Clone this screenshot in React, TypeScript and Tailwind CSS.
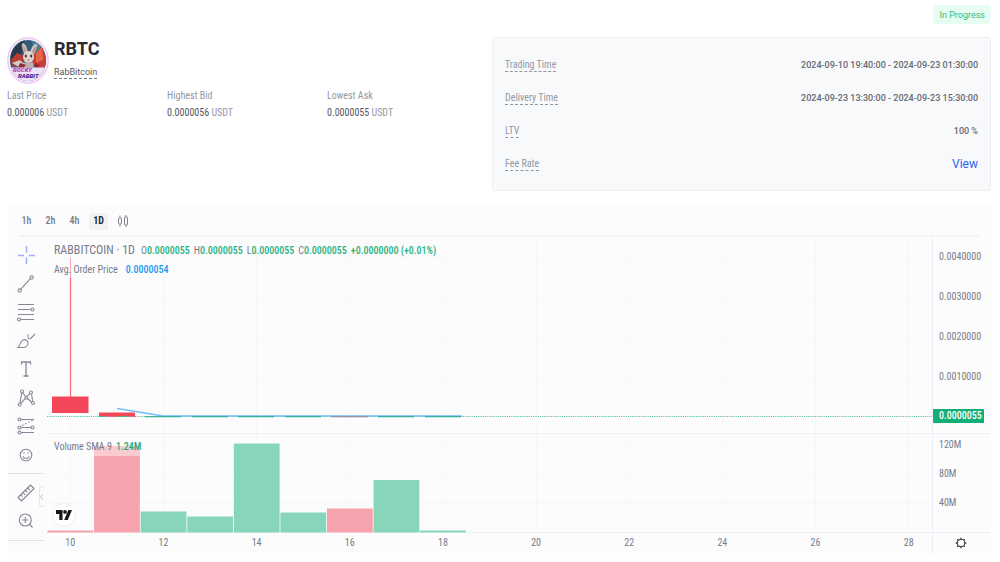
import React from 'react';

const intervals = ['1h', '2h', '4h', '1D'];
const prices = ['0.0040000', '0.0030000', '0.0020000', '0.0010000'];
const days = [10, 11, 12, 13, 14, 15, 16, 17, 18, 19, 20, 21, 22, 23, 24, 25, 26, 27, 28];
const quotes = [
  { label: 'Last Price', value: '0.000006' },
  { label: 'Highest Bid', value: '0.0000056' },
  { label: 'Lowest Ask', value: '0.0000055' },
];
const details = [
  { label: 'Trading Time', value: '2024-09-10 19:40:00 - 2024-09-23 01:30:00' },
  { label: 'Delivery Time', value: '2024-09-23 13:30:00 - 2024-09-23 15:30:00' },
  { label: 'LTV', value: '100 %' },
];
const ohlc = [
  { key: 'O', value: '0.0000055' },
  { key: 'H', value: '0.0000055' },
  { key: 'L', value: '0.0000055' },
  { key: 'C', value: '0.0000055' },
];
const volumes = [
  { day: 0, top: 293.5, up: false },
  { day: 1, top: 219, up: false },
  { day: 2, top: 274.5, up: true },
  { day: 3, top: 279.5, up: true },
  { day: 4, top: 206.5, up: true },
  { day: 5, top: 275.5, up: true },
  { day: 6, top: 271.5, up: false },
  { day: 7, top: 243, up: true },
  { day: 8, top: 293.5, up: true },
];

function Avatar() {
  return (
    <svg viewBox="0 0 42 47" className="h-[47px] w-[42px] shrink-0" role="img" aria-label="RabBitcoin logo">
      <defs>
        <clipPath id="coin">
          <ellipse cx="21" cy="23.5" rx="18" ry="20.5" />
        </clipPath>
      </defs>
      <ellipse cx="21" cy="23.5" rx="20.3" ry="22.8" fill="#f3e8fa" stroke="#edb8ee" strokeWidth="1" />
      <g clipPath="url(#coin)">
        <rect width="42" height="47" fill="#315d79" />
        <path d="M2 3h16l-3 13L4 27Z" fill="#263b50" />
        <path d="M25 4l14 5v19H29Z" fill="#40829b" />
        <path d="M3 24l7-8 8 3-2 9-9 2Z" fill="#b83c34" />
        <path d="M23 17l7-2 5-7 5 17-3 7-12-3Z" fill="#c83d35" />
        <path d="M29 16l6-6 1 13-7 3Z" fill="#e5644a" />
        <path d="M5 26l8-3 4 4-5 3Z" fill="#d6ccc7" />
        <path d="M18 18C15 12 14 7 16 6c3 1 4 6 5 10M23 16c1-5 4-10 7-9 1 3-2 8-4 12" fill="#d9d0cb" stroke="#8c8587" strokeWidth=".7" />
        <path d="M17.500 15c-1.500-4-1.500-6-1-7 1.500 2 2 4 2.500 7M25 16c.5-3 2-6 4-7 0 2-1 5-3 8" fill="#b98c86" />
        <ellipse cx="21.500" cy="20" rx="5.500" ry="6" fill="#ddd5cf" />
        <ellipse cx="18.800" cy="19" rx="1.100" ry="1.600" fill="#443036" />
        <ellipse cx="24.200" cy="19" rx="1.100" ry="1.600" fill="#443036" />
        <path d="M20 22.500h3l-1.500 1.800Z" fill="#ba6c6d" />
        <path d="M16 25.500h10l2 5H14Z" fill="#bdb1b2" />
        <path d="M13 26l6 2-3 3h-5ZM28 26l5 2-3 3-4-2Z" fill="#8f2b35" />
        <path d="M1 30.500h38v17H1Z" fill="#eee2f7" />
      </g>
      <g fontFamily="Roboto" fontWeight="900" fontStyle="italic">
        <text x="6" y="35" fontSize="6" fill="#b6349c">ROCKY</text>
        <text x="11" y="41" fontSize="6" fill="#4b258f">RABBIT</text>
      </g>
    </svg>
  );
}

function ToolIcon({ children }: { children: React.ReactNode }) {
  return (
    <svg viewBox="0 0 20 20" className="size-5" fill="none" stroke="#858897" strokeWidth="1.1" aria-hidden="true">
      {children}
    </svg>
  );
}

const drawingTools = [
  { name: 'Crosshair', icon: <path d="M10.500 1v6.500M10.500 12.500V19M2 10.500h6M13 10.500h6" stroke="#9caef5" strokeWidth="1.500" /> },
  { name: 'Trend line', icon: <><path d="M4.700 15.300l9.600-10.600" /><circle cx="3.600" cy="16.500" r="1.600" /><circle cx="15.700" cy="3.500" r="1.600" /></> },
  { name: 'Fib retracement', icon: <><path d="M2 2.500h16M2 7.500h12.500M2 12.500h16M5 17.500h13" /><circle cx="16.500" cy="7.500" r="1.500" /><circle cx="3" cy="17.500" r="1.500" /></> },
  { name: 'Brush', icon: <path d="M2 16.500C4.500 14 4 10.500 7 9c2.500-1 5 .5 5 3 0 3-2.500 4.500-5 4.500ZM12 3.500c-.8 2.800.5 5 2.700 4L19 3" /> },
  { name: 'Text', icon: <path d="M5.500 5.500V3h9v2.500M10 3v14M7.500 17h5" strokeWidth="1.300" /> },
  { name: 'Pattern', icon: <><path d="M4 15L5.700 5M7 5l2.500 3.500M11.500 8L14 5.700M15.500 6.500l1.300 7M5 15.300l4-4.600M11.500 10.500l4.500 4" /><circle cx="6" cy="3.500" r="1.500" /><circle cx="15" cy="4.500" r="1.500" /><circle cx="3.700" cy="16.500" r="1.500" /><circle cx="17" cy="15" r="1.500" /><circle cx="10.300" cy="9.700" r="1.300" /></> },
  { name: 'Position', icon: <><path d="M5 3.500h13M5 11.500h10M5 16.500h13" /><path d="M6 9.500l12-6" strokeDasharray="1.500 2" /><circle cx="3.500" cy="3.500" r="1.500" /><circle cx="3.500" cy="11.500" r="1.500" /><circle cx="16.500" cy="11.500" r="1.500" /><circle cx="3.500" cy="16.500" r="1.500" /></> },
  { name: 'Emoji', icon: <><circle cx="10" cy="10" r="5.800" /><path d="M8 7.300v1.500M12 7.300v1.500M6.800 11.500c1.200 2.600 5.200 2.600 6.400 0" /></> },
];

const viewTools = [
  { name: 'Measure', icon: <path d="M2 14.500L14.500 2 18 5.500 5.500 18ZM4.700 12l1.700 1.700M7 9.700l2.200 2.200M9.300 7.300L11 9M11.700 5l2.200 2.200" strokeLinejoin="round" /> },
  { name: 'Zoom in', icon: <><circle cx="9.300" cy="9" r="6" /><path d="M9.300 6v6M6.300 9h6M13.700 13.500L16.500 16.500" /></> },
];

function ToolButton({ name, children }: { name: string; children: React.ReactNode }) {
  return (
    <button type="button" aria-label={name} className="flex h-7 w-full items-center justify-center">
      <ToolIcon>{children}</ToolIcon>
    </button>
  );
}

function Plot() {
  const width = 885;
  const step = width / days.length;
  return (
    <svg viewBox="0 0 885 296" preserveAspectRatio="none" className="block h-[296px] w-full" role="img" aria-label="Price and volume chart">
      <g stroke="#f6f7f9" strokeWidth="1">
        {days.filter((d) => d % 2 === 0).map((d) => {
          const x = Math.floor((d - 9.5) * step) + 0.5;
          return <path key={d} d={`M${x} 0V296`} />;
        })}
        <path d="M0 20.500H885M0 60.500H885M0 100.500H885M0 140.500H885M0 208.500H885M0 237.500H885M0 266.500H885" />
      </g>
      <path d="M0 196.500H885M0 295.500H885" stroke="#edf0fa" />
      <path d="M23.500 21V41" stroke="#f9a5ae" strokeWidth="1" />
      <path d="M23.500 41V160" stroke="#f66b7a" strokeWidth="1.200" />
      <rect x="5" y="159.500" width="36.500" height="16.500" fill="#f4475a" />
      <rect x="52" y="175.500" width="36" height="4.500" fill="#f4475a" />
      <path d="M0 179.500H885" stroke="#5fc49f" strokeDasharray="1.200 1" />
      <path d="M70 171.500L116 179H415" fill="none" stroke="#72bdf8" strokeWidth="1.500" />
      <path d="M98 179.800H134M145 179.800H181M191 179.800H227M238 179.800H274M331 179.800H367M378 179.800H414" stroke="#20a88a" strokeWidth="1.100" />
      <path d="M284 179.800H321" stroke="#a0818a" strokeWidth="1" />
      <rect x="47" y="209" width="46" height="10" fill="#f9cbd0" />
      {volumes.map((v) => (
        <rect key={v.day} x={v.day * step + 0.500} y={v.top} width={step - 0.800} height={295.500 - v.top} fill={v.up ? '#87d6ba' : '#f7a3ad'} />
      ))}
    </svg>
  );
}

export default function App() {
  return (
    <main className="bg-white pr-[9px] pl-[7px] font-['Roboto_Condensed','Roboto',sans-serif] text-[10px] leading-3 text-[#555862]">
      <div className="flex justify-end pt-[5px]">
        <span className="rounded-[3px] bg-[#e8fdf2] px-1.5 pt-1 pb-0.5 font-['Roboto',sans-serif] text-[9px] leading-[13px] text-[#2cb981]">In Progress</span>
      </div>

      <section className="mt-[13px] flex items-start">
        <div className="min-w-0 flex-1">
          <div className="flex gap-[5px]">
            <Avatar />
            <div className="flex flex-col items-start">
              <h1 className="font-['Roboto',sans-serif] text-[18px] leading-6 font-bold text-[#2a2b35]">RBTC</h1>
              <span className="mt-1.5 border-b border-dashed border-[#777b87] font-['Roboto',sans-serif] text-[9px] leading-[11px]">RabBitcoin</span>
            </div>
          </div>
          <dl className="mt-1.5 flex">
            {quotes.map((q) => (
              <div key={q.label} className="w-[33%]">
                <dt className="text-[#9297a3]">{q.label}</dt>
                <dd className="mt-[5px]">{q.value} <span className="text-[#9297a3]">USDT</span></dd>
              </div>
            ))}
          </dl>
        </div>
        <dl className="flex h-[154px] w-[499px] max-w-[51%] shrink-0 flex-col justify-between rounded-[3px] border border-[#eceef1] bg-[#f8f9fb] px-3 pt-5 pb-[19px]">
          {details.map((d) => (
            <div key={d.label} className="flex items-center justify-between">
              <dt className="border-b border-dashed border-[#9297a3] pt-px text-[#9297a3]">{d.label}</dt>
              <dd className="font-['Roboto',sans-serif] text-[9px] font-medium text-[#666973]">{d.value}</dd>
            </div>
          ))}
          <div className="flex items-center justify-between">
            <dt className="border-b border-dashed border-[#9297a3] pt-px text-[#9297a3]">Fee Rate</dt>
            <dd className="leading-3"><a href="#fee" className="font-['Roboto',sans-serif] text-[12px] text-[#2f62f3]">View</a></dd>
          </div>
        </dl>
      </section>

      <section className="mt-[15px] ml-px bg-[#fcfcfc] text-[#767b8c]">
        <div className="mr-3 ml-[11px] flex h-[31px] items-center gap-[5px] border-b-2 border-[#f3f4f6] pt-px">
          <div className="-ml-0.5 flex items-center gap-[5px]">
            {intervals.map((i) => (
              <button key={i} type="button" className={i === '1D' ? 'h-[17px] w-[19px] rounded-[2px] bg-[#f2f2f5] font-bold text-[#292b35]' : 'h-[17px] w-[19px] font-medium'}>{i}</button>
            ))}
          </div>
          <button type="button" aria-label="Chart type" className="flex h-[17px] w-5 items-center justify-center">
            <svg viewBox="0 0 12 14" className="h-[14px] w-3" fill="none" stroke="#7e8290">
              <rect x="1.500" y="4" width="3" height="6" rx="1" />
              <rect x="7.500" y="3" width="3" height="8" rx="1" />
              <path d="M3 1.500V4M3 10v2.500M9 1v2M9 11v2" />
            </svg>
          </button>
        </div>

        <div className="flex">
          <nav aria-label="Drawing tools" className="relative flex w-9 shrink-0 flex-col pt-1">
            <div className="flex h-[228px] flex-col justify-between">
              {drawingTools.map((t) => <ToolButton key={t.name} name={t.name}>{t.icon}</ToolButton>)}
            </div>
            <div className="mt-1 border-y border-[#dfe2eb] pt-[5px] pb-[5px]">
              {viewTools.map((t) => <ToolButton key={t.name} name={t.name}>{t.icon}</ToolButton>)}
            </div>
            <button type="button" aria-label="Hide tools" className="absolute right-0 bottom-[46px] flex h-[21px] w-[5px] items-center rounded-l-[3px] border border-r-0 border-[#e6e8ed]">
              <svg viewBox="0 0 3 6" className="h-1.5 w-[3px]" fill="none" stroke="#b5bdc9"><path d="M2.500 .5L.7 3l1.800 2.500" /></svg>
            </button>
          </nav>

          <div className="ml-[3px] min-w-0 flex-1">
            <div className="relative">
              <Plot />
              <div className="absolute top-1.5 left-[7px]">
                <div className="flex items-baseline gap-1 whitespace-nowrap">
                  <span className="mr-0.5 text-[12px] leading-[15px]">RABBITCOIN · 1D</span>
                  {ohlc.map((o) => <span key={o.key}>{o.key}<span className="font-medium text-[#27b17f]">{o.value}</span></span>)}
                  <span className="font-medium text-[#27b17f]">+0.0000000 (+0.01%)</span>
                </div>
                <div className="mt-1.5 flex gap-2">
                  <span>Avg. Order Price</span>
                  <span className="font-medium text-[#2497f3]">0.0000054</span>
                </div>
              </div>
              <div className="absolute top-[204px] left-[7px] flex gap-1">
                <span>Volume SMA 9</span>
                <span className="font-medium text-[#27a97d]">1.24M</span>
              </div>
              <a href="#tradingview" aria-label="TradingView" className="absolute bottom-1.5 left-[5px] flex size-6 items-center justify-center rounded-full border border-[#eceef1] bg-white">
                <svg viewBox="0 0 16 10" className="h-2.5 w-4" fill="#15171d">
                  <path d="M0 0h6.500v10H3.300V4H0Z" />
                  <circle cx="9" cy="1.900" r="1.900" />
                  <path d="M12.300 0H16l-4.200 10H8.200Z" />
                </svg>
              </a>
            </div>
            <div className="grid h-5 grid-cols-19 items-center text-center">
              {days.map((d) => <span key={d}>{d % 2 === 0 ? d : ''}</span>)}
            </div>
          </div>

          <div className="flex w-[59px] shrink-0 flex-col border-l border-[#edf0fa]">
            <div className="h-[197px] border-b border-[#edf0fa]">
              {prices.map((p) => <div key={p} className="flex h-10 items-center pl-1.5">{p}</div>)}
              <div className="mt-3 h-[14px] w-[51px] bg-[#16ae77] pl-1.5 leading-[14px] font-medium text-white">0.0000055</div>
            </div>
            <div className="flex h-[99px] flex-col gap-[17px] border-b border-[#edf0fa] pt-[5px] pl-1.5">
              <span>120M</span>
              <span>80M</span>
              <span>40M</span>
            </div>
            <button type="button" aria-label="Chart settings" className="flex h-5 items-center justify-center pr-0.5">
              <svg viewBox="0 0 14 14" className="size-3" fill="none" stroke="#3c3f4a">
                <circle cx="7" cy="7" r="4.400" strokeWidth="1.200" />
                <path d="M7 .8v2M7 11.200v2M.8 7h2M11.200 7h2M2.600 2.600L4 4M10 10l1.400 1.400M2.600 11.400L4 10M10 4l1.400-1.400" strokeWidth="1.500" />
              </svg>
            </button>
          </div>
        </div>
      </section>
    </main>
  );
}
